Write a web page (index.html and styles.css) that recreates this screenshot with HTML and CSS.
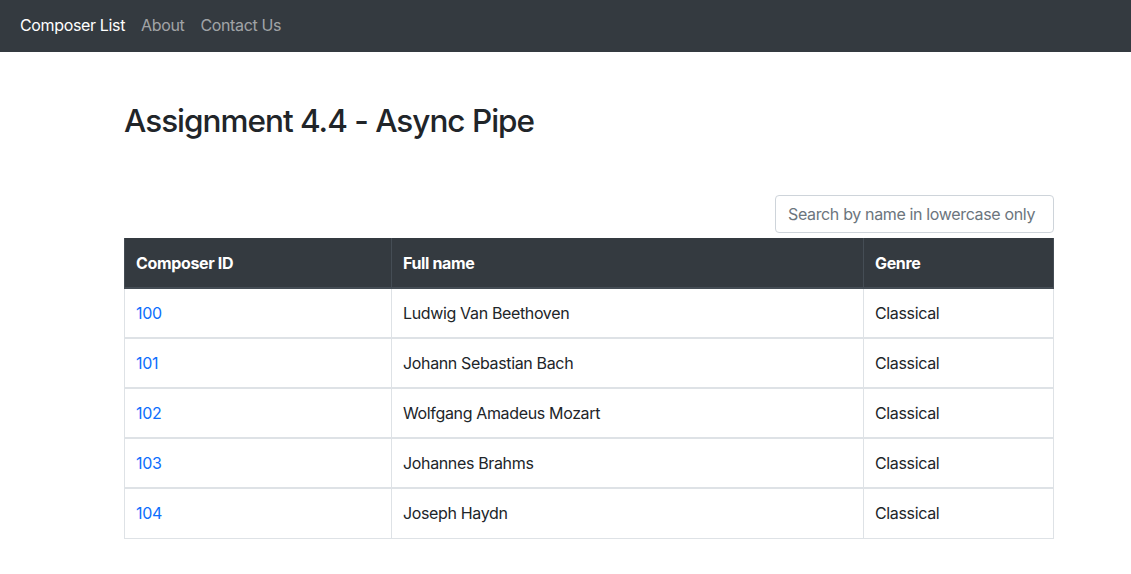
FILE: index.html
```html
<!DOCTYPE html>
<html lang="en">
<head>
<meta charset="utf-8">
<title>Composer List</title>
<link rel="stylesheet" href="styles.css">
</head>
<body>
<nav class="navbar">
  <a class="nav-link active" href="#">Composer List</a>
  <a class="nav-link" href="#">About</a>
  <a class="nav-link" href="#">Contact Us</a>
</nav>
<main class="container">
  <h2 class="title">Assignment 4.4 - Async Pipe</h2>
  <div class="search-row">
    <input class="search" type="text" placeholder="Search by name in lowercase only">
  </div>
  <table class="table">
    <thead>
      <tr><th class="c1">Composer ID</th><th class="c2">Full name</th><th class="c3">Genre</th></tr>
    </thead>
    <tbody>
      <tr><td><a href="#">100</a></td><td>Ludwig Van Beethoven</td><td>Classical</td></tr>
      <tr><td><a href="#">101</a></td><td>Johann Sebastian Bach</td><td>Classical</td></tr>
      <tr><td><a href="#">102</a></td><td>Wolfgang Amadeus Mozart</td><td>Classical</td></tr>
      <tr><td><a href="#">103</a></td><td>Johannes Brahms</td><td>Classical</td></tr>
      <tr><td><a href="#">104</a></td><td>Joseph Haydn</td><td>Classical</td></tr>
    </tbody>
  </table>
</main>
</body>
</html>
```
FILE: styles.css
```css
* { box-sizing: border-box; }
body {
  margin: 0;
  font-family: Inter, "Noto Sans", sans-serif;
  font-size: 16px;
  line-height: 1.5;
  letter-spacing: -0.022em;
  color: #212529;
  background: #fff;
}
.navbar {
  display: flex;
  align-items: center;
  height: 52px;
  padding: 0 12px 2px;
  background: #343a40;
}
.nav-link {
  padding: 8px 8px;
  color: rgba(255,255,255,.55);
  text-decoration: none;
  font-size: 16px;
}
.nav-link.active { color: #fff; }
.container {
  width: 930px;
  margin-left: 124px;
}
.title {
  margin: 50px 0 0;
  font-size: 31.5px;
  font-weight: 500;
  line-height: 1.2;
  letter-spacing: -0.032em;
}
.search-row {
  display: flex;
  justify-content: flex-end;
  margin-top: 55px;
  margin-bottom: 5px;
}
.search {
  width: 279px;
  height: 38px;
  padding: 6px 12px;
  border: 1px solid #ced4da;
  border-radius: 4px;
  font-family: inherit;
  font-size: 16px;
  letter-spacing: -0.022em;
  color: #212529;
}
.search::placeholder { color: #6c757d; }
.table {
  width: 930px;
  border-collapse: collapse;
}
.table th, .table td {
  padding: 12px 12px 12px 11px;
  text-align: left;
  line-height: 24px;
  border: 1px solid #dee2e6;
}
.table th {
  padding-top: 13px;
  background: #343a40;
  color: #fff;
  font-weight: 700;
  border-color: #454d55;
  border-top: none;
}
.table thead th { border-bottom: 2px solid #454d55; }
.table tbody tr + tr td { border-top-width: 2px; }
.table tbody tr:last-child td { padding-bottom: 13px; }
.c1 { width: 267px; }
.c2 { width: 472px; }
.table td a { color: #0d6efd; text-decoration: none; }
```
